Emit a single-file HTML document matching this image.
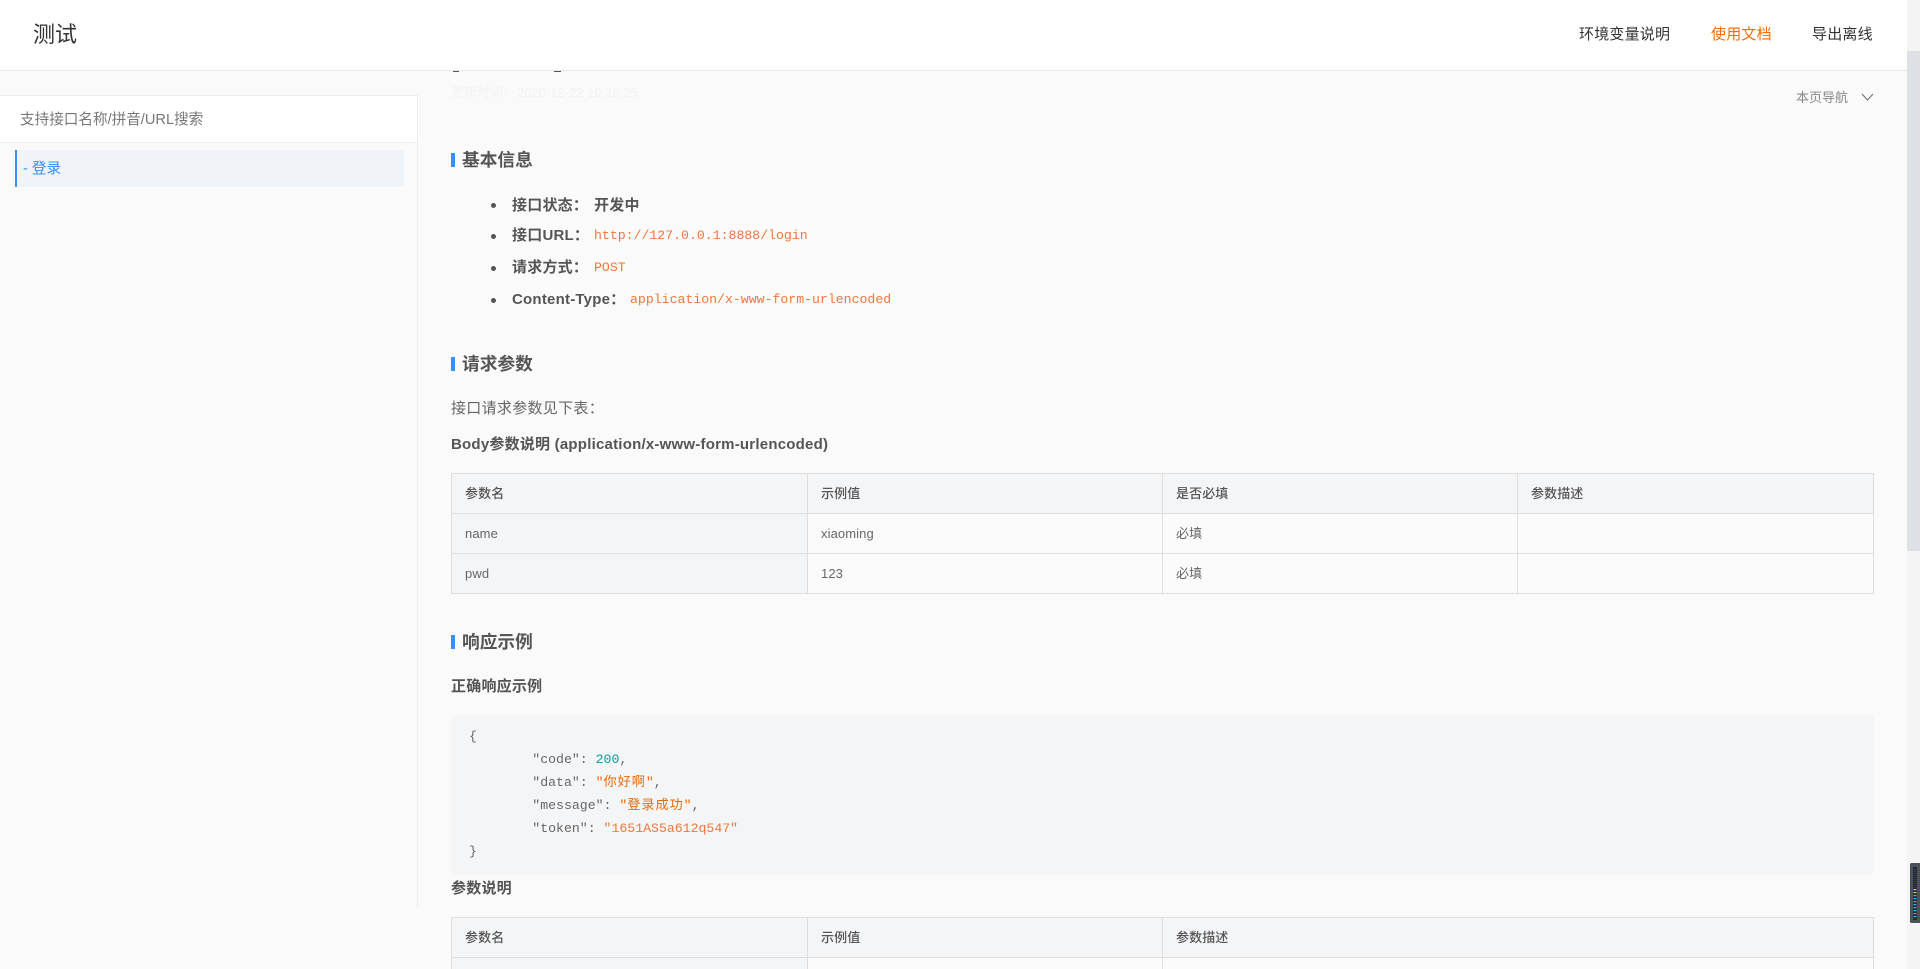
<!DOCTYPE html>
<html lang="zh-CN">
<head>
<meta charset="utf-8">
<title>测试</title>
<style>
html,body{margin:0;padding:0;width:1920px;height:969px;overflow:hidden;background:#fafafa}
body{position:relative;font-family:"Liberation Sans","Noto Sans CJK SC",sans-serif;color:#666}
.a{position:absolute;white-space:pre;line-height:24px;height:24px}
.box{position:absolute;box-sizing:border-box}
.bar{position:absolute;left:451px;width:4px;height:14px;background:#3a8ef6}
.h{left:462px;font-size:17.7px;font-weight:bold;color:#555}
.b{font-size:15px;font-weight:bold;color:#555;letter-spacing:.22px}
.p{font-size:15px;color:#666;letter-spacing:.3px}
.c{font-family:"Liberation Mono","Noto Sans CJK SC",monospace;font-size:13.2px;font-weight:normal;color:#f0773c}
.dot{position:absolute;left:491px;width:5px;height:5px;border-radius:50%;background:#555}
.th{font-size:13px;color:#555;font-weight:500;letter-spacing:.1px}
.td{font-size:13px;color:#666;letter-spacing:.1px}
.m{font-family:"Liberation Mono","Noto Sans CJK SC",monospace;font-size:13.2px;color:#666;left:469px}
.s{color:#ea6a0a}.n{color:#0f9a9a}
.k{letter-spacing:.9px}
.line{position:absolute;background:#dedede}
</style>
</head>
<body>
<!-- clipped title marks -->
<div class="box" style="left:453px;top:71px;width:6px;height:1px;background:#555"></div>
<div class="box" style="left:554px;top:71px;width:7px;height:1px;background:#555"></div>

<!-- content -->
<div class="a" style="left:451px;top:81px;font-size:13px;color:#f3f3f3">更新时间：</div>
<div class="a" style="left:517px;top:81px;font-size:13px;color:#f3f3f3">2020-12-22 10:26:25</div>
<div class="a" style="left:1796px;top:86px;font-size:13px;color:#888">本页导航</div>
<svg class="box" style="left:1861px;top:92px" width="13" height="10" viewBox="0 0 13 10"><path d="M1 2l5.5 6L12 2" fill="none" stroke="#777" stroke-width="1.2"/></svg>

<div class="bar" style="top:153px"></div>
<div class="a h" style="top:148px">基本信息</div>
<div class="dot" style="top:203px"></div>
<div class="a b" style="left:512px;top:194px">接口状态：</div>
<div class="a b" style="left:594px;top:194px">开发中</div>
<div class="dot" style="top:234px"></div>
<div class="a b" style="left:512px;top:224px">接口URL：</div>
<div class="a c" style="left:594px;top:224px">http://127.0.0.1:8888/login</div>
<div class="dot" style="top:266px"></div>
<div class="a b" style="left:512px;top:256px">请求方式：</div>
<div class="a c" style="left:594px;top:256px">POST</div>
<div class="dot" style="top:298px"></div>
<div class="a b" style="left:512px;top:288px">Content-Type：</div>
<div class="a c" style="left:630px;top:288px">application/x-www-form-urlencoded</div>

<div class="bar" style="top:357px"></div>
<div class="a h" style="top:352px">请求参数</div>
<div class="a p" style="left:451px;top:397px">接口请求参数见下表：</div>
<div class="a b" style="left:451px;top:433px">Body参数说明 (application/x-www-form-urlencoded)</div>

<!-- table 1 -->
<div class="box" style="left:451px;top:473px;width:1423px;height:121px;background:#fbfbfb"></div>
<div class="box" style="left:451px;top:473px;width:1423px;height:40px;background:#f4f5f7"></div>
<div class="box" style="left:451px;top:473px;width:356px;height:121px;background:#f4f5f7"></div>
<div class="line" style="left:451px;top:473px;width:1423px;height:1px"></div>
<div class="line" style="left:451px;top:513px;width:1423px;height:1px"></div>
<div class="line" style="left:451px;top:553px;width:1423px;height:1px"></div>
<div class="line" style="left:451px;top:593px;width:1423px;height:1px"></div>
<div class="line" style="left:451px;top:473px;width:1px;height:121px"></div>
<div class="line" style="left:807px;top:473px;width:1px;height:121px"></div>
<div class="line" style="left:1162px;top:473px;width:1px;height:121px"></div>
<div class="line" style="left:1517px;top:473px;width:1px;height:121px"></div>
<div class="line" style="left:1873px;top:473px;width:1px;height:121px"></div>
<div class="a th" style="left:465px;top:482px">参数名</div>
<div class="a th" style="left:821px;top:482px">示例值</div>
<div class="a th" style="left:1176px;top:482px">是否必填</div>
<div class="a th" style="left:1531px;top:482px">参数描述</div>
<div class="a td" style="left:465px;top:522px">name</div>
<div class="a td" style="left:821px;top:522px">xiaoming</div>
<div class="a td" style="left:1176px;top:522px">必填</div>
<div class="a td" style="left:465px;top:562px">pwd</div>
<div class="a td" style="left:821px;top:562px">123</div>
<div class="a td" style="left:1176px;top:562px">必填</div>

<div class="bar" style="top:635px"></div>
<div class="a h" style="top:630px">响应示例</div>
<div class="a b" style="left:451px;top:675px">正确响应示例</div>

<!-- code -->
<div class="box" style="left:451px;top:715px;width:1423px;height:160px;background:#f4f5f7;border-radius:5px"></div>
<div class="a m" style="top:725px">{</div>
<div class="a m" style="top:748px">        "code": <span class="n">200</span>,</div>
<div class="a m" style="top:771px">        "data": <span class="s">"<span class="k">你好啊</span>"</span>,</div>
<div class="a m" style="top:794px">        "message": <span class="s">"<span class="k">登录成功</span>"</span>,</div>
<div class="a m" style="top:817px">        "token": <span class="s" style="color:#f0773c">"1651AS5a612q547"</span></div>
<div class="a m" style="top:840px">}</div>

<div class="a b" style="left:451px;top:877px">参数说明</div>

<!-- table 2 -->
<div class="box" style="left:451px;top:917px;width:1423px;height:52px;background:#fbfbfb"></div>
<div class="box" style="left:451px;top:917px;width:1423px;height:40px;background:#f4f5f7"></div>
<div class="box" style="left:451px;top:917px;width:356px;height:52px;background:#f4f5f7"></div>
<div class="line" style="left:451px;top:917px;width:1423px;height:1px"></div>
<div class="line" style="left:451px;top:957px;width:1423px;height:1px"></div>
<div class="line" style="left:451px;top:917px;width:1px;height:52px"></div>
<div class="line" style="left:807px;top:917px;width:1px;height:52px"></div>
<div class="line" style="left:1162px;top:917px;width:1px;height:52px"></div>
<div class="line" style="left:1873px;top:917px;width:1px;height:52px"></div>
<div class="a th" style="left:465px;top:926px">参数名</div>
<div class="a th" style="left:821px;top:926px">示例值</div>
<div class="a th" style="left:1176px;top:926px">参数描述</div>

<!-- sidebar -->
<div class="box" style="left:417px;top:95px;width:1px;height:813px;background:#eeeeee"></div>
<div class="box" style="left:0;top:95px;width:418px;height:48px;background:#fff;border-top:1px solid #eee;border-bottom:1px solid #eee;border-right:1px solid #eee"></div>
<div class="a" style="left:20px;top:108px;font-size:14.6px;color:#777">支持接口名称/拼音/URL搜索</div>
<div class="box" style="left:15px;top:150px;width:389px;height:37px;background:#f0f4f8;border-left:2px solid #3a8ef6"></div>
<div class="a" style="left:23px;top:157px;font-size:14.6px;color:#3a8ef6">- 登录</div>

<!-- header -->
<div class="box" style="left:0;top:0;width:1907px;height:71px;background:#fff;border-bottom:1px solid #e8e8e8"></div>
<div class="a" style="left:33px;top:23px;font-size:22px;color:#333">测试</div>
<div class="a" style="left:1579px;top:23px;font-size:15px;color:#333;letter-spacing:.2px">环境变量说明</div>
<div class="a" style="left:1711px;top:23px;font-size:15px;color:#ff6a00;letter-spacing:.2px">使用文档</div>
<div class="a" style="left:1812px;top:23px;font-size:15px;color:#333;letter-spacing:.2px">导出离线</div>

<!-- scrollbar -->
<div class="box" style="left:1907px;top:0;width:13px;height:969px;background:#f4f4f4"></div>
<div class="box" style="left:1907px;top:51px;width:13px;height:500px;background:#dde1e6"></div>

<!-- side widget -->
<svg class="box" style="left:1910px;top:863px" width="10" height="60" viewBox="0 0 10 60">
<path d="M1 0H10V60H1L0 59V1Z" fill="#4d525a"/>
<rect x="3" y="4" width="4" height="53" fill="#262a33"/>
<g fill="#383c46"><rect x="3.5" y="6" width="3" height="1"/><rect x="3.5" y="8" width="3" height="1"/><rect x="3.5" y="10" width="3" height="1"/><rect x="3.5" y="12" width="3" height="1"/><rect x="3.5" y="14" width="3" height="1"/><rect x="3.5" y="16" width="3" height="1"/><rect x="3.5" y="18" width="3" height="1"/><rect x="3.5" y="20" width="3" height="1"/><rect x="3.5" y="22" width="3" height="1"/><rect x="3.5" y="24" width="3" height="1"/></g>
<rect x="3.5" y="26" width="3" height="1.2" fill="#a6d96a"/><rect x="3.5" y="29" width="3" height="1.2" fill="#9fe08a"/>
<g fill="#35b4e6"><rect x="3.5" y="32" width="3" height="1.2"/><rect x="3.5" y="35" width="3" height="1.2"/><rect x="3.5" y="38" width="3" height="1.2"/><rect x="3.5" y="41" width="3" height="1.2"/><rect x="3.5" y="44" width="3" height="1.2"/><rect x="3.5" y="47" width="3" height="1.2"/><rect x="3.5" y="50" width="3" height="1.2"/><rect x="3.5" y="53" width="3" height="1.2"/></g>
</svg>
</body>
</html>
